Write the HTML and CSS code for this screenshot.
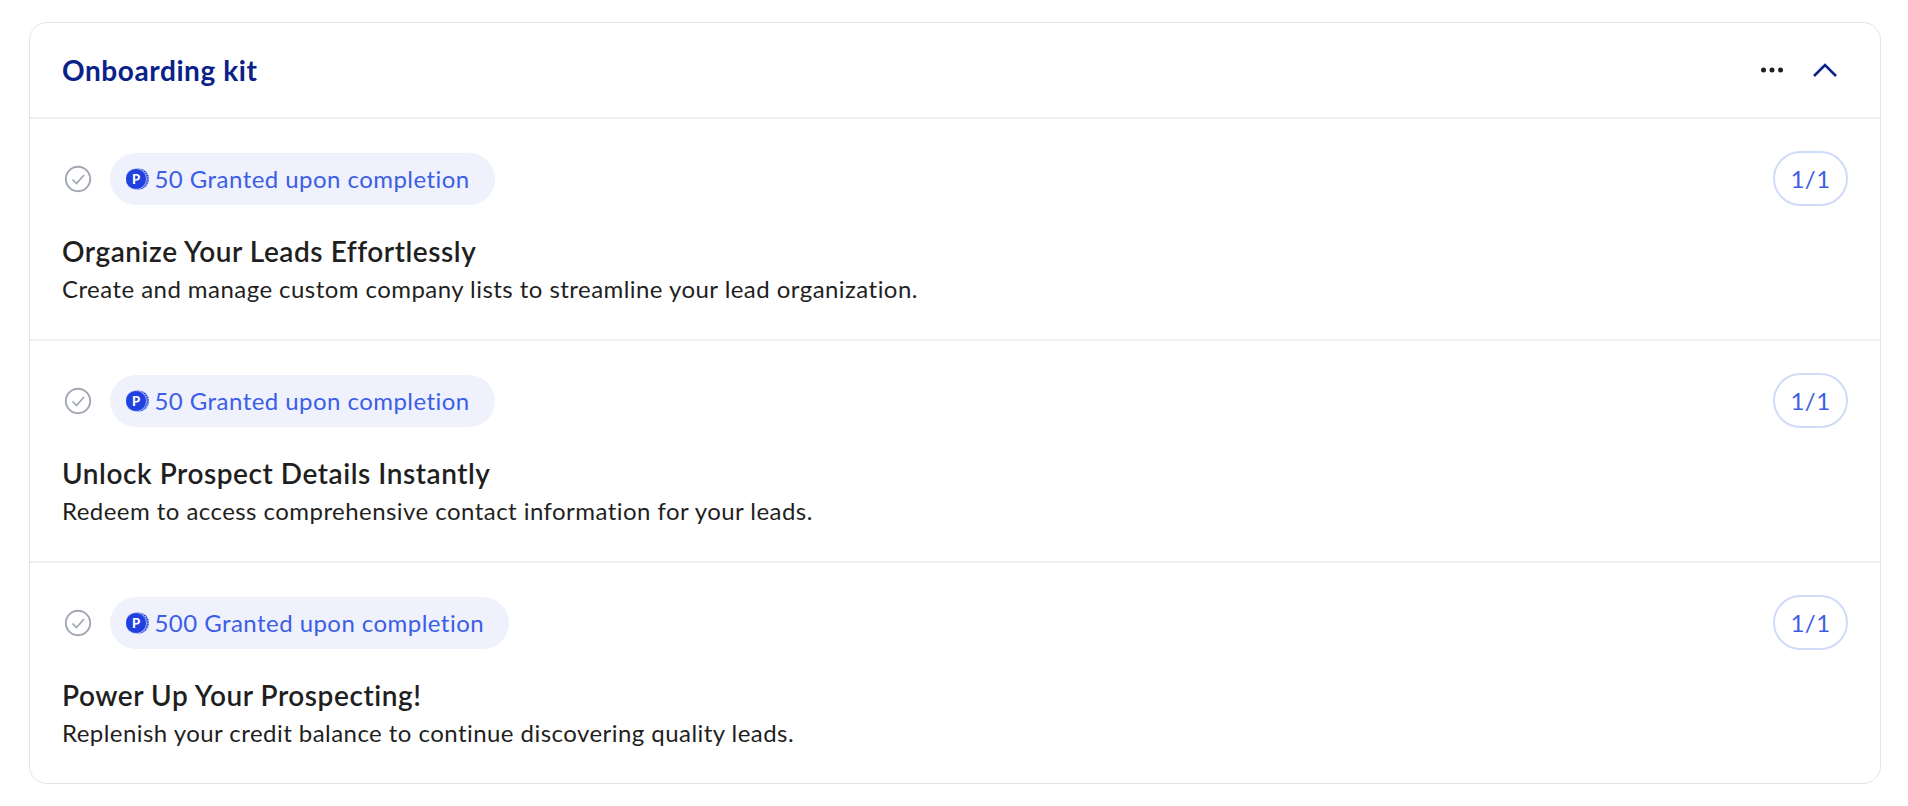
FILE: index.html
```html
<!DOCTYPE html>
<html lang="en">
  <head>
    <meta charset="UTF-8" />
    <title>Onboarding kit</title>
    <link rel="stylesheet" href="styles.css">
  </head>
  <body>
    <div class="card">
      <div class="card-header">
        <div class="card-title">Onboarding kit</div>
        <div class="card-actions">
          <svg class="icon-more" width="22" height="6" viewBox="0 0 22 6" fill="#1f1f1f">
            <circle cx="2.5" cy="3" r="2.5" /><circle cx="11" cy="3" r="2.5" /><circle cx="19.5" cy="3" r="2.5" />
          </svg>
          <svg class="icon-chevron" width="24" height="14" viewBox="0 0 24 14" fill="none" stroke="#0a2189" stroke-width="2.6">
            <path d="M1 13 L12 2 L23 13" />
          </svg>
        </div>
      </div>

      <!-- Task 1 -->
      <div class="task">
        <div class="task-top">
          <svg class="icon-check" width="28" height="28" viewBox="0 0 28 28" fill="none" stroke="#a0a6b4">
            <circle cx="14" cy="14" r="12.2" stroke-width="1.9" />
            <path d="M8.5 14.5 L12.5 18.5 L20 10" stroke-width="1.7" />
          </svg>
          <div class="reward">
            <svg class="icon-coin" width="23" height="24" viewBox="0 0 23 24">
              <circle cx="12.5" cy="12" r="10.5" fill="#2140e0" />
              <circle cx="12.8" cy="12" r="9.3" fill="none" stroke="#fff" stroke-width="1" stroke-dasharray="1.2 1.2" />
              <circle cx="10" cy="12" r="10.5" fill="#2140e0" stroke="#eff2fd" stroke-width="0.6" />
              <text x="10" y="16.6" class="coin-letter">P</text>
            </svg>
            <span>50 Granted upon completion</span>
          </div>
          <div class="count">1/1</div>
        </div>
        <div class="task-title">Organize Your Leads Effortlessly</div>
        <div class="task-desc">Create and manage custom company lists to streamline your lead organization.</div>
      </div>

      <!-- Task 2 -->
      <div class="task">
        <div class="task-top">
          <svg class="icon-check" width="28" height="28" viewBox="0 0 28 28" fill="none" stroke="#a0a6b4">
            <circle cx="14" cy="14" r="12.2" stroke-width="1.9" />
            <path d="M8.5 14.5 L12.5 18.5 L20 10" stroke-width="1.7" />
          </svg>
          <div class="reward">
            <svg class="icon-coin" width="23" height="24" viewBox="0 0 23 24">
              <circle cx="12.5" cy="12" r="10.5" fill="#2140e0" />
              <circle cx="12.8" cy="12" r="9.3" fill="none" stroke="#fff" stroke-width="1" stroke-dasharray="1.2 1.2" />
              <circle cx="10" cy="12" r="10.5" fill="#2140e0" stroke="#eff2fd" stroke-width="0.6" />
              <text x="10" y="16.6" class="coin-letter">P</text>
            </svg>
            <span>50 Granted upon completion</span>
          </div>
          <div class="count">1/1</div>
        </div>
        <div class="task-title">Unlock Prospect Details Instantly</div>
        <div class="task-desc">Redeem to access comprehensive contact information for your leads.</div>
      </div>

      <!-- Task 3 -->
      <div class="task">
        <div class="task-top">
          <svg class="icon-check" width="28" height="28" viewBox="0 0 28 28" fill="none" stroke="#a0a6b4">
            <circle cx="14" cy="14" r="12.2" stroke-width="1.9" />
            <path d="M8.5 14.5 L12.5 18.5 L20 10" stroke-width="1.7" />
          </svg>
          <div class="reward">
            <svg class="icon-coin" width="23" height="24" viewBox="0 0 23 24">
              <circle cx="12.5" cy="12" r="10.5" fill="#2140e0" />
              <circle cx="12.8" cy="12" r="9.3" fill="none" stroke="#fff" stroke-width="1" stroke-dasharray="1.2 1.2" />
              <circle cx="10" cy="12" r="10.5" fill="#2140e0" stroke="#eff2fd" stroke-width="0.6" />
              <text x="10" y="16.6" class="coin-letter">P</text>
            </svg>
            <span>500 Granted upon completion</span>
          </div>
          <div class="count">1/1</div>
        </div>
        <div class="task-title">Power Up Your Prospecting!</div>
        <div class="task-desc">Replenish your credit balance to continue discovering quality leads.</div>
      </div>
    </div>
  </body>
</html>
```

FILE: styles.css
```css
body {
  font-family: "Lato", sans-serif;
  background: #fff;
  color: #1f1f1f;
  margin: 0;
  padding: 22px 27px 22px 29px;
}

.card {
  border: 1.5px solid #e3e4e9;
  border-radius: 18px;
}

.card-header {
  display: flex;
  justify-content: space-between;
  align-items: center;
  box-sizing: border-box;
  height: 95.5px;
  padding: 0 43.5px 0 32px;
  border-bottom: 2px solid #eeeff2;
}

.card-title {
  font-size: 28px;
  font-weight: 700;
  letter-spacing: 0.58px;
  color: #0a2189;
}

.card-actions {
  display: flex;
  align-items: center;
  gap: 30px;
}

.task {
  height: 222px;
  padding: 34px 32px 0 32px;
  box-sizing: border-box;
  border-bottom: 2px solid #eeeff2;
}

.task:last-child {
  height: 220px;
  border-bottom: none;
}

.task-top {
  display: flex;
  align-items: center;
  gap: 18px;
  height: 52px;
  margin-bottom: 28px;
}

.icon-check {
  flex: none;
  margin-left: 1.5px;
}

.reward {
  display: flex;
  align-items: center;
  gap: 6px;
  height: 52px;
  padding: 0 25px 0 16px;
  background: #eff2fd;
  border-radius: 26px;
  font-size: 24px;
  letter-spacing: 0.45px;
  color: #3c5ee6;
}

.coin-letter {
  font-size: 13px;
  font-weight: 900;
  letter-spacing: 0;
  fill: #fff;
  text-anchor: middle;
}

.count {
  margin-left: auto;
  width: 75px;
  height: 55px;
  flex: none;
  box-sizing: border-box;
  display: flex;
  align-items: center;
  justify-content: center;
  border: 2px solid #d0dbfa;
  border-radius: 28px;
  font-size: 24px;
  letter-spacing: 0.45px;
  color: #3c5ee6;
}

.task-title {
  font-size: 28px;
  font-weight: 600;
  line-height: 36px;
  letter-spacing: 0.55px;
}

.task-desc {
  font-size: 24px;
  line-height: 40px;
  letter-spacing: 0.45px;
}
```
